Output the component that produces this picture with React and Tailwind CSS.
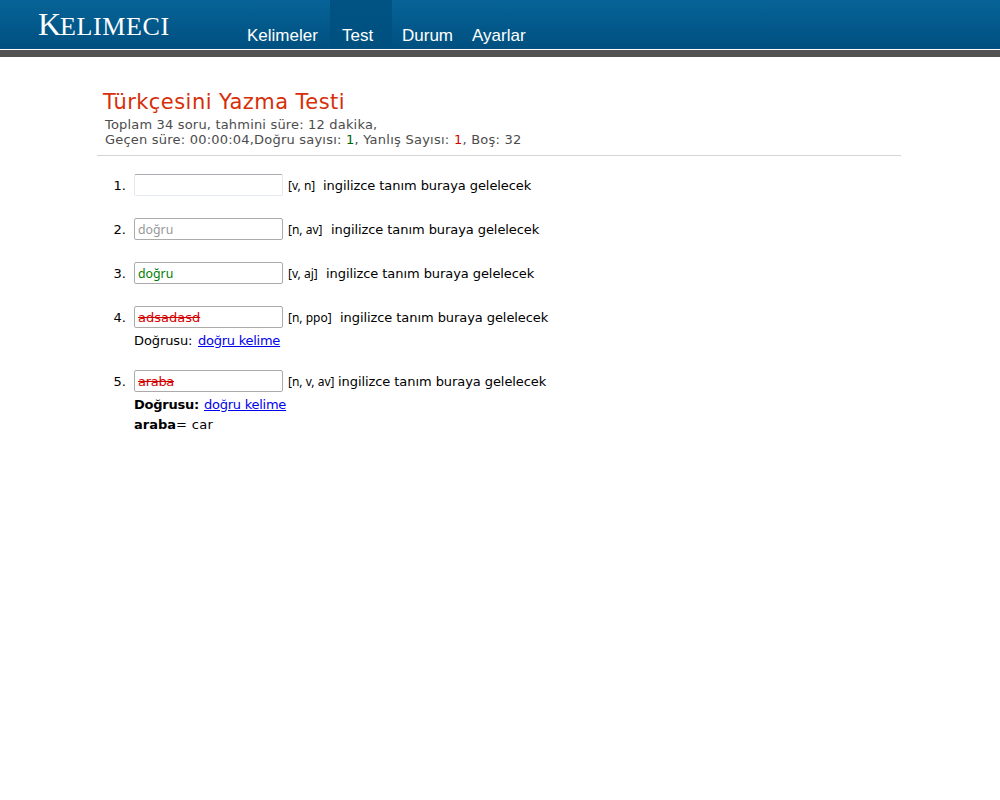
const verdana = "font-['DejaVu_Sans',sans-serif]";
const humanist = "font-['Noto_Sans',sans-serif]";

const navItems = [
  { label: 'Kelimeler', box: 'w-[95px] pl-[12px]', active: false },
  { label: 'Test', box: 'w-[62px] pl-[12px]', active: true },
  { label: 'Durum', box: 'w-[70px] pl-[10px]', active: false },
  { label: 'Ayarlar', box: 'w-[80px] pl-[10px]', active: false },
];

const word = "font-['Noto_Sans',sans-serif] text-[12.3px]";

const questions = [
  { value: '', tone: 'border-[#e3e9ef] border-t-[#abadb3]', kinds: '[v, n]', kindsWidth: 'w-[35px]', height: 'h-[44px]' },
  { value: 'doğru', tone: `border-[#ababab] text-[#999999] ${word}`, kinds: '[n, av]', kindsWidth: 'w-[43px]', height: 'h-[44px]' },
  { value: 'doğru', tone: `border-[#ababab] text-[#008000] ${word}`, kinds: '[v, aj]', kindsWidth: 'w-[38px]', height: 'h-[44px]' },
  { value: 'adsadasd', tone: 'border-[#ababab] text-[#d40000] line-through', kinds: '[n, ppo]', kindsWidth: 'w-[52px]', height: 'h-[64px]', answer: true },
  { value: 'araba', tone: 'border-[#ababab] text-[#d40000] line-through tracking-[-0.3px]', kinds: '[n, v, av]', kindsWidth: 'w-[50px]', height: 'h-[64px]', answer: true, strong: true, word: 'araba', meaning: '= car' },
];

function Header() {
  return (
    <header className="h-[57px] border-b-[7px] border-[#525252]">
      <div className="flex h-[50px] border-b border-white bg-linear-to-b from-[#076398] to-[#00507f]">
        <div className="w-[235px] pl-[38px] pt-[4px] font-['Liberation_Serif',serif] leading-[40px] whitespace-nowrap text-white">
          <span className="text-[32px] tracking-[-1px]">K</span>
          <span className="text-[26px] tracking-[0.6px]">ELIMECI</span>
        </div>
        <nav className="flex font-['Liberation_Sans',sans-serif] text-[17px] leading-[20px] text-white">
          {navItems.map((item) => (
            <a key={item.label} className={`h-[49px] shrink-0 pt-[26px] ${item.box} ${item.active ? 'bg-linear-to-b from-[#005384] to-[#00507f]' : ''}`}>
              {item.label}
            </a>
          ))}
        </nav>
      </div>
    </header>
  );
}

function Question({ number, q }) {
  return (
    <li className={`flex ${q.height}`}>
      <span className="w-[29px] shrink-0 pr-[8px] text-right leading-[23px]">{number}.</span>
      <div>
        <div className="flex h-[22px] whitespace-nowrap leading-[23px]">
          <div className={`h-[22px] w-[149px] rounded-[2px] border pl-[3px] leading-[22px] ${q.tone}`}>{q.value}</div>
          <span className={`ml-[5px] shrink-0 text-[12px] ${humanist} ${q.kindsWidth}`}>{q.kinds}</span>
          <span className="tracking-[-0.07px]">ingilizce tanım buraya gelelecek</span>
        </div>
        {q.answer && (
          <div className="mt-[3px] leading-[20px] whitespace-nowrap">
            <span className={q.strong ? 'inline-block w-[70px] font-bold tracking-[-0.25px]' : 'inline-block w-[64px] tracking-[-0.1px]'}>Doğrusu:</span>
            <a className="tracking-[-0.25px] text-[#0000ee] underline">doğru kelime</a>
          </div>
        )}
        {q.word && (
          <div className="leading-[20px]">
            <b>{q.word}</b><span className="tracking-[0.35px]">{q.meaning}</span>
          </div>
        )}
      </div>
    </li>
  );
}

export default function App() {
  return (
    <div className={`h-[800px] w-[1000px] overflow-hidden bg-white text-[13px] text-black ${verdana}`}>
      <Header />
      <main className="ml-[97px] w-[804px]">
        <div className="h-[99px] border-b border-[#d5d5d5] pt-[30px]">
          <h1 className="pl-[6px] text-[21px] leading-[30px] tracking-[0.45px] text-[#d62f09]">Türkçesini Yazma Testi</h1>
          <div className="pl-[8px] leading-[15px] text-[#4c4c4c]">
            <p className="tracking-[0.18px]">Toplam 34 soru, tahmini süre: 12 dakika,</p>
            <p className="tracking-[0.25px]">
              <span className="tracking-[0.21px]">Geçen süre: 00:00:04,Doğru sayısı: </span><span className="text-[#006400]">1</span>, Yanlış Sayısı: <span className="text-[#d40000]">1</span>, Boş: 32
            </p>
          </div>
        </div>
        <ol className="ml-[8px] pt-[18px]">
          {questions.map((q, i) => (
            <Question key={i} number={i + 1} q={q} />
          ))}
        </ol>
      </main>
    </div>
  );
}
